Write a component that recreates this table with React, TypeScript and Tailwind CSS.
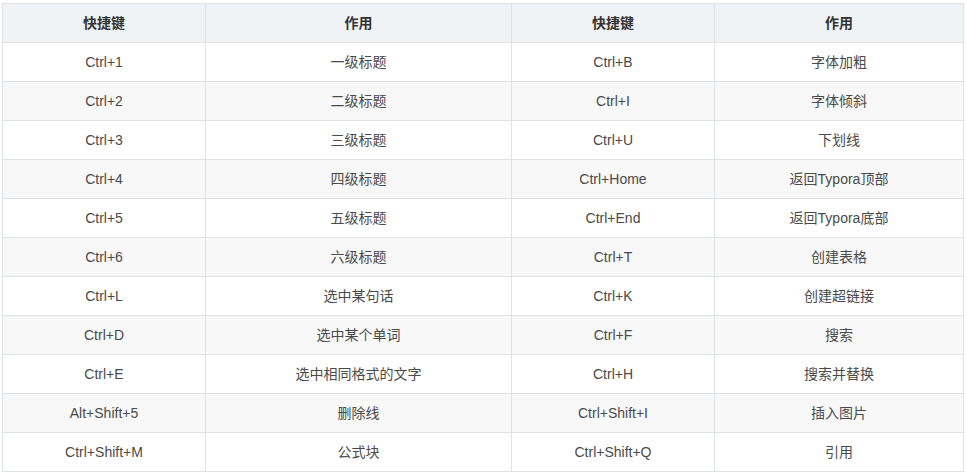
import React from 'react';

const rows: [string, string, string, string][] = [
  ['Ctrl+1', '一级标题', 'Ctrl+B', '字体加粗'],
  ['Ctrl+2', '二级标题', 'Ctrl+I', '字体倾斜'],
  ['Ctrl+3', '三级标题', 'Ctrl+U', '下划线'],
  ['Ctrl+4', '四级标题', 'Ctrl+Home', '返回Typora顶部'],
  ['Ctrl+5', '五级标题', 'Ctrl+End', '返回Typora底部'],
  ['Ctrl+6', '六级标题', 'Ctrl+T', '创建表格'],
  ['Ctrl+L', '选中某句话', 'Ctrl+K', '创建超链接'],
  ['Ctrl+D', '选中某个单词', 'Ctrl+F', '搜索'],
  ['Ctrl+E', '选中相同格式的文字', 'Ctrl+H', '搜索并替换'],
  ['Alt+Shift+5', '删除线', 'Ctrl+Shift+I', '插入图片'],
  ['Ctrl+Shift+M', '公式块', 'Ctrl+Shift+Q', '引用'],
];

const cell = 'border border-[#dfe2e5] h-[39px] p-0 text-center align-middle';

export default function App() {
  return (
    <div className="w-[967px] h-[474px] bg-white pt-[3px] pl-[2px] font-['Liberation_Sans','Noto_Sans_CJK_SC',sans-serif] text-[14px] text-[#4a4a4a]">
      <table className="border-collapse table-fixed w-[961px]">
        <colgroup>
          <col className="w-[203px]" />
          <col className="w-[306px]" />
          <col className="w-[203px]" />
          <col className="w-[249px]" />
        </colgroup>
        <thead>
          <tr className="bg-[#f0f3f6]">
            {['快捷键', '作用', '快捷键', '作用'].map((h, i) => (
              <th key={i} className={`${cell} font-bold text-[#333]`}>{h}</th>
            ))}
          </tr>
        </thead>
        <tbody>
          {rows.map((r, i) => (
            <tr key={i} className={i % 2 === 1 ? 'bg-[#f8f8f8]' : 'bg-white'}>
              {r.map((c, j) => (
                <td key={j} className={cell}>{c}</td>
              ))}
            </tr>
          ))}
        </tbody>
      </table>
    </div>
  );
}
